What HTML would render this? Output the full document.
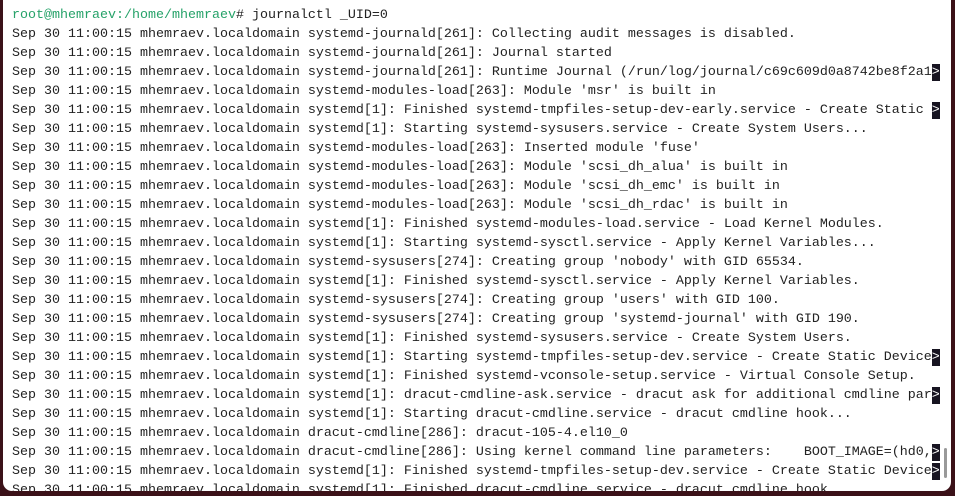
<!DOCTYPE html>
<html><head><style>
html,body{margin:0;padding:0;width:955px;height:496px;background:#3b1118;overflow:hidden}
.p{position:absolute;left:3px;top:0;width:948px;height:491px;background:#fff;border-radius:0 0 9px 9px;overflow:hidden}
.t{position:absolute;left:9px;top:6px;font-family:"Liberation Mono",monospace;font-size:13.33px;line-height:19px;color:#222;white-space:pre}
.g{color:#26a269}
.k{display:inline-block;width:8px;height:17px;background:#171421;color:#fff;text-align:center;line-height:17px;vertical-align:top;margin-top:1px}
.sb{position:absolute;left:941px;top:448px;width:3px;height:30px;background:#999;border-radius:2px}
</style></head><body><div class="p"><div class="t"><span class="g">root@mhemraev:/home/mhemraev</span># journalctl _UID=0
Sep 30 11:00:15 mhemraev.localdomain systemd-journald[261]: Collecting audit messages is disabled.
Sep 30 11:00:15 mhemraev.localdomain systemd-journald[261]: Journal started
Sep 30 11:00:15 mhemraev.localdomain systemd-journald[261]: Runtime Journal (/run/log/journal/c69c609d0a8742be8f2a1<span class="k">&gt;</span>
Sep 30 11:00:15 mhemraev.localdomain systemd-modules-load[263]: Module 'msr' is built in
Sep 30 11:00:15 mhemraev.localdomain systemd[1]: Finished systemd-tmpfiles-setup-dev-early.service - Create Static <span class="k">&gt;</span>
Sep 30 11:00:15 mhemraev.localdomain systemd[1]: Starting systemd-sysusers.service - Create System Users...
Sep 30 11:00:15 mhemraev.localdomain systemd-modules-load[263]: Inserted module 'fuse'
Sep 30 11:00:15 mhemraev.localdomain systemd-modules-load[263]: Module 'scsi_dh_alua' is built in
Sep 30 11:00:15 mhemraev.localdomain systemd-modules-load[263]: Module 'scsi_dh_emc' is built in
Sep 30 11:00:15 mhemraev.localdomain systemd-modules-load[263]: Module 'scsi_dh_rdac' is built in
Sep 30 11:00:15 mhemraev.localdomain systemd[1]: Finished systemd-modules-load.service - Load Kernel Modules.
Sep 30 11:00:15 mhemraev.localdomain systemd[1]: Starting systemd-sysctl.service - Apply Kernel Variables...
Sep 30 11:00:15 mhemraev.localdomain systemd-sysusers[274]: Creating group 'nobody' with GID 65534.
Sep 30 11:00:15 mhemraev.localdomain systemd[1]: Finished systemd-sysctl.service - Apply Kernel Variables.
Sep 30 11:00:15 mhemraev.localdomain systemd-sysusers[274]: Creating group 'users' with GID 100.
Sep 30 11:00:15 mhemraev.localdomain systemd-sysusers[274]: Creating group 'systemd-journal' with GID 190.
Sep 30 11:00:15 mhemraev.localdomain systemd[1]: Finished systemd-sysusers.service - Create System Users.
Sep 30 11:00:15 mhemraev.localdomain systemd[1]: Starting systemd-tmpfiles-setup-dev.service - Create Static Device<span class="k">&gt;</span>
Sep 30 11:00:15 mhemraev.localdomain systemd[1]: Finished systemd-vconsole-setup.service - Virtual Console Setup.
Sep 30 11:00:15 mhemraev.localdomain systemd[1]: dracut-cmdline-ask.service - dracut ask for additional cmdline par<span class="k">&gt;</span>
Sep 30 11:00:15 mhemraev.localdomain systemd[1]: Starting dracut-cmdline.service - dracut cmdline hook...
Sep 30 11:00:15 mhemraev.localdomain dracut-cmdline[286]: dracut-105-4.el10_0
Sep 30 11:00:15 mhemraev.localdomain dracut-cmdline[286]: Using kernel command line parameters:    BOOT_IMAGE=(hd0,<span class="k">&gt;</span>
Sep 30 11:00:15 mhemraev.localdomain systemd[1]: Finished systemd-tmpfiles-setup-dev.service - Create Static Device<span class="k">&gt;</span>
Sep 30 11:00:15 mhemraev.localdomain systemd[1]: Finished dracut-cmdline.service - dracut cmdline hook.
</div><div class="sb"></div></div></body></html>
